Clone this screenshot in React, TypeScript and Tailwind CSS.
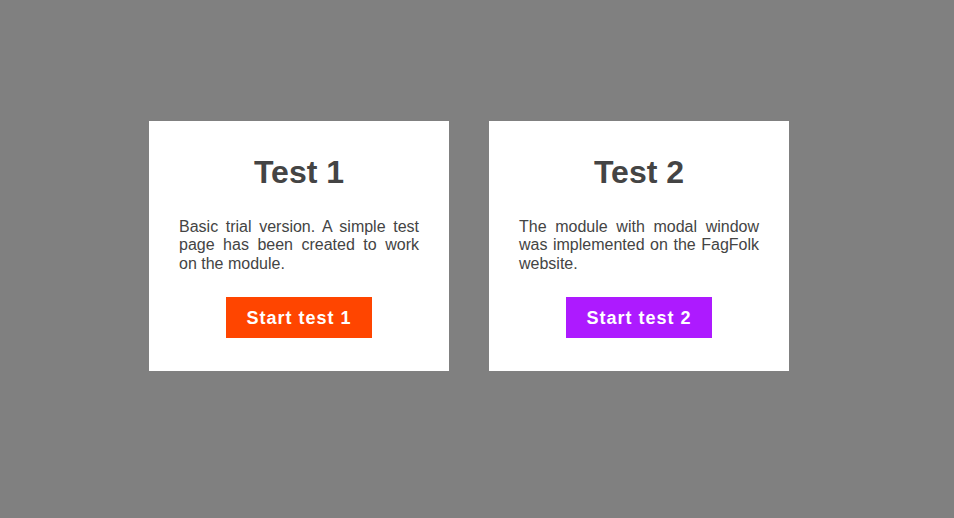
import React from "react";

const tests = [
  {
    title: "Test 1",
    text: "Basic trial version. A simple test page has been created to work on the module.",
    button: "Start test 1",
    color: "bg-[#ff4500]",
  },
  {
    title: "Test 2",
    text: "The module with modal window was implemented on the FagFolk website.",
    button: "Start test 2",
    color: "bg-[#ad1aff]",
  },
];

const App = () => {
  return (
    <div
      className="min-h-screen w-full bg-[#808080] pt-[121px] pl-[149px] text-[#444444]"
      style={{ fontFamily: '"Liberation Sans", Arial, sans-serif' }}
    >
      <div className="flex gap-10">
        {tests.map((t) => (
          <div
            key={t.title}
            className="w-[300px] h-[250px] bg-white px-[30px] pt-[33px] flex flex-col items-center"
          >
            <h2 className="text-[32px] leading-[36px] font-bold text-center">
              {t.title}
            </h2>
            <p className="mt-[28px] text-[16px] leading-[18.4px] text-justify w-full">
              {t.text}
            </p>
            <button
              type="button"
              className={`${t.color} mt-[24px] h-[41px] px-[20px] pt-[2px] text-white font-bold text-[18px] tracking-[1px]`}
            >
              {t.button}
            </button>
          </div>
        ))}
      </div>
    </div>
  );
};

export default App;
